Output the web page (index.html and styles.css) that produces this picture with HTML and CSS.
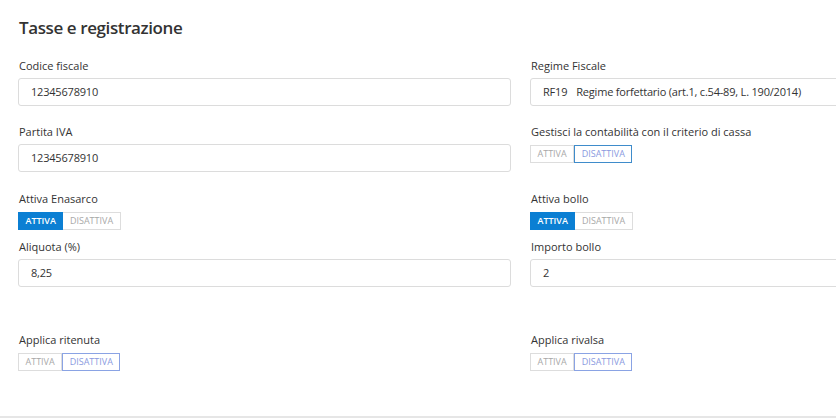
FILE: index.html
```html
<!DOCTYPE html>
<html lang="it">
<head>
<meta charset="utf-8">
<title>Tasse e registrazione</title>
<link rel="stylesheet" href="styles.css">
</head>
<body>
<section class="panel">
  <h2 class="title">Tasse e registrazione</h2>
  <div class="grid">
    <div class="field gap-a">
      <label class="label">Codice fiscale</label>
      <div class="input">12345678910</div>
    </div>
    <div class="field gap-a">
      <label class="label">Regime Fiscale</label>
      <div class="input"><span class="code">RF19</span>Regime forfettario (art.1, c.54-89, L. 190/2014)</div>
    </div>

    <div class="field gap-b">
      <label class="label">Partita IVA</label>
      <div class="input">12345678910</div>
    </div>
    <div class="field gap-b">
      <label class="label">Gestisci la contabilità con il criterio di cassa</label>
      <div class="toggle">
        <span class="opt">ATTIVA</span><span class="opt sel sel-strong">DISATTIVA</span>
      </div>
    </div>

    <div class="field gap-c">
      <label class="label">Attiva Enasarco</label>
      <div class="toggle">
        <span class="opt on">ATTIVA</span><span class="opt">DISATTIVA</span>
      </div>
    </div>
    <div class="field gap-c">
      <label class="label">Attiva bollo</label>
      <div class="toggle">
        <span class="opt on">ATTIVA</span><span class="opt">DISATTIVA</span>
      </div>
    </div>

    <div class="field gap-d">
      <label class="label">Aliquota (%)</label>
      <div class="input">8,25</div>
    </div>
    <div class="field gap-d">
      <label class="label">Importo bollo</label>
      <div class="input">2</div>
    </div>

    <div class="field">
      <label class="label">Applica ritenuta</label>
      <div class="toggle">
        <span class="opt">ATTIVA</span><span class="opt sel">DISATTIVA</span>
      </div>
    </div>
    <div class="field">
      <label class="label">Applica rivalsa</label>
      <div class="toggle">
        <span class="opt">ATTIVA</span><span class="opt sel">DISATTIVA</span>
      </div>
    </div>
  </div>
</section>
</body>
</html>
```

FILE: styles.css
```css
html, body {
  margin: 0;
  padding: 0;
  background: #ffffff;
  overflow: hidden;
}

body {
  font-family: "Open Sans", "Liberation Sans", sans-serif;
  color: #333333;
  width: 836px;
  height: 418px;
}

.panel {
  width: 1042px;
  height: 418px;
  box-sizing: border-box;
  padding: 16px 0 0 18px;
  border-bottom: 2px solid #e6e6e6;
}

.title {
  margin: 0 0 17px 1px;
  font-size: 17px;
  line-height: 24px;
  font-weight: 600;
  letter-spacing: -0.4px;
  color: #333333;
}

.grid {
  display: grid;
  grid-template-columns: 493px 493px;
  column-gap: 19px;
}

.field {
  display: flex;
  flex-direction: column;
  align-items: flex-start;
}

.gap-a { padding-bottom: 17px; }
.gap-b { padding-bottom: 18px; }
.gap-c { padding-bottom: 8px; }
.gap-d { padding-bottom: 44px; }

.label {
  font-size: 11px;
  line-height: 17px;
  color: #333333;
  margin: 0 0 4px 1px;
}

.input {
  box-sizing: border-box;
  width: 100%;
  height: 28px;
  border: 1px solid #dcdcdc;
  border-radius: 3px;
  padding: 0 12px;
  font-size: 11px;
  line-height: 26px;
  letter-spacing: -0.2px;
  color: #333333;
  white-space: nowrap;
}

.code {
  margin-right: 9px;
}

.toggle {
  display: flex;
  margin-top: 1px;
}

.opt {
  box-sizing: border-box;
  height: 18px;
  line-height: 16px;
  font-size: 9px;
  color: #a8a8a8;
  border: 1px solid #dddddd;
  padding: 0 6.5px;
}

.opt + .opt {
  border-left: none;
}

.opt.on {
  background: #0b7fd3;
  border-color: #0b7fd3;
  color: #ffffff;
  font-weight: 600;
}

.opt.sel {
  border: 1px solid #8aa3e4;
  color: #8a9ae0;
}

.opt.sel-strong {
  border-color: #3f8ccb;
}
```
